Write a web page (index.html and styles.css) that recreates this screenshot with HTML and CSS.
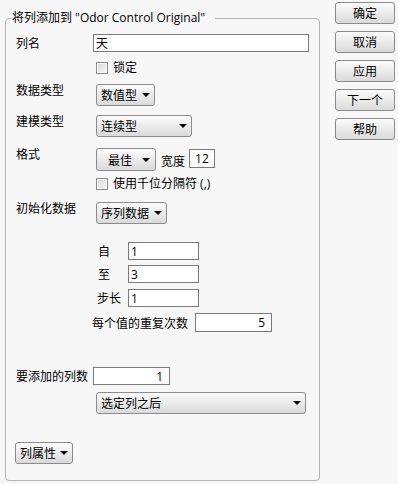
FILE: index.html
```html
<!DOCTYPE html>
<html lang="zh-CN">
<head>
    <meta charset="UTF-8">
    <title>将列添加到</title>
    <link rel="stylesheet" href="styles.css">
</head>
<body>
    <div class="dialog">
        <fieldset class="group">
            <legend>将列添加到 "Odor Control Original"</legend>

            <div class="row row-name">
                <span class="label">列名</span>
                <input type="text" class="field field-name" value="天">
            </div>

            <label class="row check">
                <span class="box"></span>锁定
            </label>

            <div class="row row-menu">
                <span class="label">数据类型</span>
                <button class="menu w-type">数值型<i class="arrow"></i></button>
            </div>

            <div class="row row-menu row-model">
                <span class="label">建模类型</span>
                <button class="menu w-model">连续型<i class="arrow"></i></button>
            </div>

            <div class="row row-menu row-format">
                <span class="label">格式</span>
                <button class="menu w-format">最佳<i class="arrow"></i></button>
                <span class="width-label">宽度</span>
                <input type="text" class="field field-width" value="12">
            </div>

            <label class="row check check-sep">
                <span class="box"></span>使用千位分隔符 (,)
            </label>

            <div class="row row-menu row-init">
                <span class="label">初始化数据</span>
                <button class="menu w-init">序列数据<i class="arrow"></i></button>
            </div>

            <div class="seq">
                <div class="seq-row seq-first">
                    <span class="seq-label">自</span>
                    <input type="text" class="field field-seq" value="1">
                </div>
                <div class="seq-row">
                    <span class="seq-label">至</span>
                    <input type="text" class="field field-seq" value="3">
                </div>
                <div class="seq-row seq-step">
                    <span class="seq-label">步长</span>
                    <input type="text" class="field field-seq" value="1">
                </div>
                <div class="repeat-row">
                    <span>每个值的重复次数</span>
                    <input type="text" class="field field-repeat num" value="5">
                </div>
            </div>

            <div class="row row-count">
                <span class="label">要添加的列数</span>
                <input type="text" class="field field-count num" value="1">
            </div>

            <div class="row row-where">
                <button class="menu w-where">选定列之后<i class="arrow"></i></button>
            </div>

            <div class="row row-props">
                <button class="menu w-props">列属性<i class="arrow"></i></button>
            </div>
        </fieldset>

        <div class="actions">
            <button class="btn">确定</button>
            <button class="btn">取消</button>
            <button class="btn">应用</button>
            <button class="btn">下一个</button>
            <button class="btn">帮助</button>
        </div>
    </div>
</body>
</html>
```

FILE: styles.css
```css
body {
    margin: 0;
    background-color: #f7f7f7;
    color: #000;
    font-family: "Open Sans", "Noto Sans CJK SC", sans-serif;
    font-size: 12px;
}

.dialog {
    display: flex;
    align-items: flex-start;
    width: 398px;
    height: 484px;
}

/* group box */
.group {
    box-sizing: border-box;
    width: 315px;
    margin: 10px 0 0 5px;
    padding: 8px 10px 16px 10px;
    border: 1px solid #b4b4b4;
    border-radius: 4px;
    min-width: 0;
}

.group legend {
    margin-left: -5px;
    padding: 0 10px 0 1px;
    line-height: 16px;
    font-size: 12px;
}

.row {
    display: flex;
    align-items: center;
}

.label {
    width: 77px;
    flex: none;
}

.row-menu {
    height: 22px;
    margin-top: 10px;
    align-items: flex-start;
}

.row-menu .label {
    line-height: 14px;
}

.row-model { margin-top: 9px; }
.row-format { margin-top: 11px; }
.row-init { margin-top: 12px; }

.row-menu .menu {
    margin-left: 3px;
}

/* inputs */
.field {
    box-sizing: border-box;
    height: 18px;
    margin: 0;
    padding: 0 2px;
    border: 1px solid #7a7a7a;
    background: #fff;
    font-family: inherit;
    font-size: 12px;
    color: #000;
    outline: none;
}

.num {
    text-align: right;
    padding-right: 6px;
}

.field-name {
    width: 216px;
}

.row-name {
    height: 18px;
}

/* checkboxes */
.check {
    margin-top: 10px;
    margin-left: 80px;
    height: 12px;
    line-height: 12px;
}

.check-sep { margin-top: 8px; }

.box {
    box-sizing: border-box;
    width: 12px;
    height: 12px;
    margin-right: 5px;
    border: 1px solid #8e8e8e;
    background: linear-gradient(135deg, #dcdcdc, #f4f4f4);
    box-shadow: inset 0 0 0 1px #f8f8f8;
}

/* drop-down buttons */
.menu, .btn {
    box-sizing: border-box;
    height: 22px;
    margin: 0;
    border: 1px solid #8c8c8c;
    border-radius: 3px;
    background: linear-gradient(#fbfbfb, #e9e9e9 55%, #dadada);
    font-family: inherit;
    font-size: 12px;
    color: #000;
}

.menu {
    display: flex;
    align-items: center;
    padding: 0 4px;
    text-align: left;
}

.arrow {
    width: 0;
    height: 0;
    margin-left: auto;
    border-left: 4px solid transparent;
    border-right: 4px solid transparent;
    border-top: 4px solid #000;
}

.w-type { width: 59px; }
.w-model { width: 96px; }
.w-init { width: 71px; }
.w-where { width: 210px; }
.w-props { width: 58px; }

.w-format {
    width: 60px;
    height: 23px;
    justify-content: center;
    gap: 5px;
    padding-left: 10px;
}

.w-format .arrow { margin-left: 5px; }

.width-label {
    margin-left: 5px;
    margin-top: 4px;
}

.field-width {
    width: 26px;
    height: 19px;
    margin-left: 4px;
    margin-top: 1px;
    padding-left: 5px;
}

/* sequence block */
.seq {
    margin-left: 76px;
}

.seq-row {
    display: flex;
    align-items: center;
    height: 18px;
    margin-top: 5px;
}

.seq-first { margin-top: 18px; }

.seq-label {
    width: 36px;
    padding-left: 6px;
    box-sizing: border-box;
}

.seq-step { margin-top: 6px; }
.seq-step .seq-label { padding-left: 5px; }

.field-seq { width: 71px; }

.repeat-row {
    display: flex;
    align-items: center;
    height: 19px;
    margin-top: 6px;
}

.repeat-row span { width: 103px; }

.field-repeat {
    width: 77px;
    height: 19px;
}

.row-count {
    margin-top: 35px;
    height: 18px;
}

.field-count { width: 77px; }

.row-where {
    margin-top: 7px;
    padding-left: 80px;
}

.row-props {
    margin-top: 28px;
    margin-left: -1px;
}

/* right-hand buttons */
.actions {
    display: flex;
    flex-direction: column;
    gap: 7px;
    margin: 2px 0 0 15px;
}

.btn {
    width: 60px;
}
```
